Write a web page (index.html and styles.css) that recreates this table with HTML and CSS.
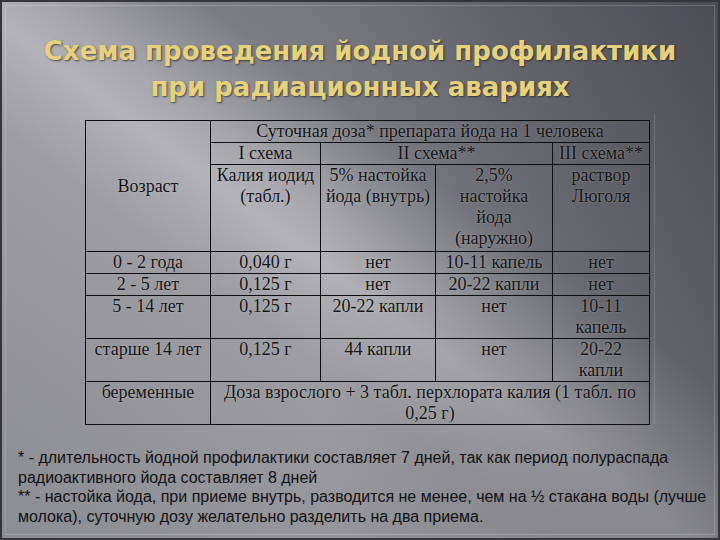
FILE: index.html
```
<!DOCTYPE html>
<html lang="ru">
<head>
<meta charset="utf-8">
<title>Схема проведения йодной профилактики</title>
<link rel="stylesheet" href="styles.css">
</head>
<body>
<div class="slide">
  <h1 class="title">Схема проведения йодной профилактики<br>при радиационных авариях</h1>
  <div class="table-wrap">
    <table class="dose">
      <colgroup>
        <col class="c-age"><col class="c-1"><col class="c-2a"><col class="c-2b"><col class="c-3">
      </colgroup>
      <tr class="r-a">
        <td rowspan="3" class="age-head">Возраст</td>
        <td colspan="4">Суточная доза* препарата йода на 1 человека</td>
      </tr>
      <tr class="r-b">
        <td>I схема</td>
        <td colspan="2">II схема**</td>
        <td>III схема**</td>
      </tr>
      <tr class="r-c">
        <td>Калия иодид<br>(табл.)</td>
        <td>5% настойка<br>йода (внутрь)</td>
        <td>2,5%<br>настойка<br>йода<br>(наружно)</td>
        <td>раствор<br>Люголя</td>
      </tr>
      <tr class="r-d">
        <td>0 - 2 года</td><td>0,040 г</td><td>нет</td><td>10-11 капель</td><td>нет</td>
      </tr>
      <tr class="r-e">
        <td>2 - 5 лет</td><td>0,125 г</td><td>нет</td><td>20-22 капли</td><td>нет</td>
      </tr>
      <tr class="r-f">
        <td>5 - 14 лет</td><td>0,125 г</td><td>20-22 капли</td><td>нет</td><td>10-11<br>капель</td>
      </tr>
      <tr class="r-f">
        <td>старше 14 лет</td><td>0,125 г</td><td>44 капли</td><td>нет</td><td>20-22<br>капли</td>
      </tr>
      <tr class="r-f">
        <td>беременные</td>
        <td colspan="4">Доза взрослого + 3 табл. перхлората калия (1 табл. по<br>0,25 г)</td>
      </tr>
    </table>
  </div>
  <div class="notes">
    <p>* - длительность йодной профилактики составляет 7 дней, так как период полураспада<br>радиоактивного йода составляет 8 дней</p>
    <p>** - настойка йода, при приеме внутрь, разводится не менее, чем на ½ стакана воды (лучше<br>молока), суточную дозу желательно разделить на два приема.</p>
  </div>
</div>
</body>
</html>
```

FILE: styles.css
```
html, body {
  margin: 0;
  padding: 0;
  background: #2e2e34;
}

.slide {
  position: relative;
  width: 720px;
  height: 540px;
  box-sizing: border-box;
  border: 2px solid #35353b;
  overflow: hidden;
  display: flex;
  flex-direction: column;
  background:
    linear-gradient(to right, rgba(40, 40, 48, 0) 45%, rgba(40, 40, 48, 0.35) 100%),
    linear-gradient(to top right, #8c8c93 0%, #9c9ca2 38%, #b2b2b8 48%, #a6a6ac 53%, #7c7c84 64%, #60606a 100%);
}

.slide::before {
  content: "";
  position: absolute;
  inset: 3px;
  border: 1px solid rgba(255, 255, 255, 0.18);
  pointer-events: none;
}

.title {
  margin: 31px 0 0 0;
  font-family: "DejaVu Sans", "Liberation Sans", sans-serif;
  font-weight: bold;
  font-size: 26px;
  line-height: 36px;
  text-align: center;
  color: #e6d27c;
  text-shadow: 1px 1px 2px rgba(30, 30, 30, 0.7);
}

.table-wrap {
  position: relative;
  margin: 15px 0 0 83px;
}

.table-wrap::after {
  content: "";
  position: absolute;
  left: 569px;
  top: -6px;
  width: 1px;
  height: 310px;
  background: rgba(255, 255, 255, 0.14);
}

.dose {
  border-collapse: collapse;
  table-layout: fixed;
  width: 564px;
  font-family: "Liberation Serif", "Times New Roman", serif;
  font-size: 18px;
  line-height: 21px;
  color: #141414;
  text-shadow: 0 0 2px rgba(255, 255, 255, 0.35);
}

.c-age { width: 125px; }
.c-1 { width: 110px; }
.c-2a { width: 115px; }
.c-2b { width: 117px; }
.c-3 { width: 97px; }

.dose td {
  border: 1.5px solid #0e0e0e;
  padding: 0;
  text-align: center;
  vertical-align: top;
}

.dose td.age-head {
  vertical-align: middle;
}

.r-a { height: 22px; }
.r-b { height: 21px; }
.r-c { height: 87px; }
.r-d { height: 21px; }
.r-e { height: 22px; }
.r-f { height: 43px; }

.notes {
  margin: 23px 0 0 16px;
  font-family: "Liberation Sans", Arial, sans-serif;
  font-size: 16px;
  line-height: 19.6px;
  color: #111114;
}

.notes p {
  margin: 0;
}
```
